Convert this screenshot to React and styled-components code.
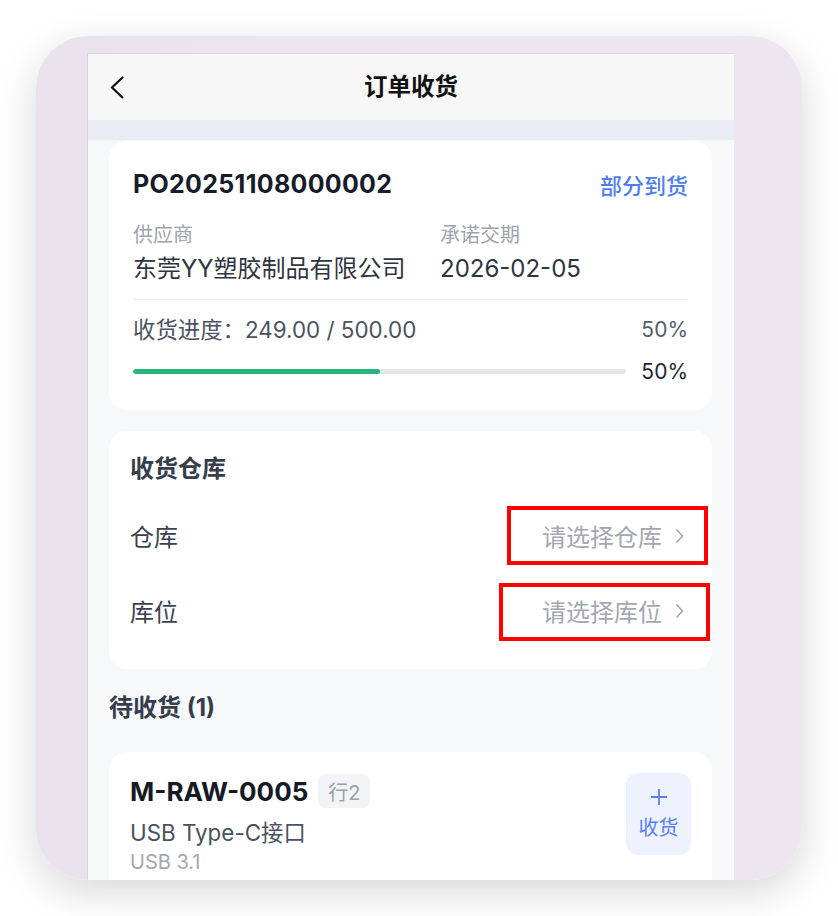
import React from "react";
import styled, { createGlobalStyle } from "styled-components";

const GlobalStyle = createGlobalStyle`
  html, body {
    margin: 0;
    padding: 0;
    background: #ffffff;
  }
  body {
    font-family: "Inter", "Noto Sans CJK SC", sans-serif;
  }
`;

const Page = styled.div`
  width: 838px;
  height: 916px;
  padding: 36px 0 0 36px;
  box-sizing: border-box;
`;

const Frame = styled.div`
  width: 766px;
  height: 844px;
  border-radius: 52px;
  background: linear-gradient(90deg, #e9e2ec 0%, #ece5f0 30%, #ede6f1 100%);
  box-shadow: 0 12px 40px rgba(0, 0, 0, 0.16);
  padding: 17px 68px 0 51px;
  box-sizing: border-box;
  overflow: hidden;
`;

const Screen = styled.div`
  height: 900px;
  background: #f7f8fa;
  border-left: 1px solid #d8d3dc;
  border-top: 1px solid #dcd7df;
  display: flex;
  flex-direction: column;
`;

const NavBar = styled.div`
  height: 66px;
  background: #f7f7f7;
  display: flex;
  align-items: center;
  justify-content: center;
  position: relative;
`;

const BackButton = styled.button`
  position: absolute;
  left: 16px;
  top: 19px;
  width: 28px;
  height: 30px;
  padding: 0;
  border: none;
  background: none;
  display: flex;
  align-items: center;
  justify-content: center;
`;

const NavTitle = styled.h1`
  margin: 0;
  font-size: 23.5px;
  font-weight: 700;
  color: #111111;
  line-height: 30px;
`;

const Strip = styled.div`
  height: 20px;
  background: #e9ecf4;
`;

const Content = styled.div`
  padding: 1px 22px 0 21px;
  display: flex;
  flex-direction: column;
`;

const Card = styled.div`
  background: #ffffff;
  border-radius: 18px;
  padding: ${(p) => p.$pad};
  margin-top: ${(p) => p.$top || "0px"};
`;

const HeadRow = styled.div`
  display: flex;
  justify-content: space-between;
  align-items: center;
  height: 34px;
`;

const OrderNo = styled.div`
  font-size: 25px;
  font-weight: 700;
  color: #171c2a;
  letter-spacing: 0.3px;
`;

const Status = styled.div`
  font-size: 22px;
  font-weight: 500;
  color: #4f7df4;
`;

const InfoGrid = styled.div`
  display: grid;
  grid-template-columns: 307px 1fr;
  margin-top: 20px;
`;

const Label = styled.div`
  font-size: 20px;
  line-height: 28px;
  color: #9ea3ad;
`;

const Value = styled.div`
  font-size: 24px;
  line-height: 32px;
  margin-top: 4px;
  color: #2f3540;
`;

const Divider = styled.div`
  height: 1px;
  background: #eeeff1;
  margin-top: 14px;
`;

const ProgressText = styled.div`
  display: flex;
  justify-content: space-between;
  margin-top: 15px;
  height: 30px;
  line-height: 30px;
  font-size: 22.4px;
  color: #4b5361;
`;

const BarRow = styled.div`
  display: flex;
  align-items: center;
  gap: 15px;
  margin-top: 11px;
  height: 30px;
`;

const Track = styled.div`
  flex: 1;
  height: 5px;
  border-radius: 3px;
  background: #e6e6e6;
  overflow: hidden;
`;

const Fill = styled.div`
  height: 100%;
  background: #2cb47d;
  border-radius: 3px;
`;

const Percent = styled.div`
  font-size: 21px;
  color: ${(p) => p.$color};
`;

const SectionTitle = styled.div`
  font-size: 24px;
  font-weight: 700;
  line-height: 28px;
  color: #363d4b;
`;

const PickRow = styled.div`
  height: 75px;
  display: flex;
  align-items: center;
  justify-content: space-between;
  margin-top: ${(p) => p.$top || "0px"};
`;

const RowLabel = styled.div`
  font-size: 24px;
  color: #3a4150;
`;

const Picker = styled.div`
  position: relative;
  display: flex;
  align-items: center;
  gap: 13px;
  height: 32px;
  margin-right: 4px;
  font-size: 24px;
  color: #a3a7b2;
`;

const Highlight = styled.span`
  position: absolute;
  top: ${(p) => p.$t}px;
  bottom: ${(p) => p.$b}px;
  left: ${(p) => p.$l}px;
  right: ${(p) => p.$r}px;
  border: 4px solid #ff0000;
  pointer-events: none;
`;

const GroupTitle = styled.div`
  margin-top: 24px;
  font-size: 24px;
  font-weight: 700;
  line-height: 30px;
  color: #363d4b;
`;

const ItemCard = styled(Card)`
  display: flex;
  justify-content: space-between;
  align-items: flex-start;
`;

const ItemInfo = styled.div`
  display: flex;
  flex-direction: column;
`;

const CodeRow = styled.div`
  display: flex;
  align-items: center;
  gap: 10px;
  margin-top: 1px;
  height: 34px;
`;

const Code = styled.div`
  font-size: 26px;
  font-weight: 700;
  color: #151a26;
`;

const Tag = styled.span`
  height: 34px;
  padding: 0 10px;
  border-radius: 7px;
  background: #f2f3f5;
  color: #9aa0a9;
  font-size: 20px;
  display: flex;
  align-items: center;
`;

const ItemName = styled.div`
  margin-top: 10px;
  font-size: 22.4px;
  line-height: 30px;
  color: #4a5160;
`;

const ItemSpec = styled.div`
  margin-top: 1px;
  font-size: 20px;
  line-height: 26px;
  color: #a2a7b1;
`;

const ReceiveButton = styled.button`
  width: 65px;
  height: 82px;
  border: none;
  border-radius: 12px;
  background: #eef2fe;
  color: #5a7ef1;
  display: flex;
  flex-direction: column;
  align-items: center;
  justify-content: center;
  gap: 6px;
  font-family: inherit;
  font-size: 20px;
  padding: 0;
`;

const Chevron = () => (
  <svg width="9" height="16" viewBox="0 0 9 16">
    <path d="M1.5 1.5 L7.5 8 L1.5 14.5" fill="none" stroke="#a3a7b2" strokeWidth="1.6" />
  </svg>
);

const pickers = [
  { label: "仓库", value: "请选择仓库", box: { t: -14, b: -13, l: -35, r: -24 } },
  { label: "库位", value: "请选择库位", box: { t: -12, b: -14, l: -43, r: -26 } },
];

export default function App() {
  const received = 249;
  const total = 500;
  const pct = Math.round((received / total) * 100);

  return (
    <Page>
      <GlobalStyle />
      <Frame>
        <Screen>
          <NavBar>
            <BackButton>
              <svg width="16" height="26" viewBox="0 0 16 26">
                <path d="M13 2 L2 12.5 L13 23" fill="none" stroke="#111" strokeWidth="2.2" />
              </svg>
            </BackButton>
            <NavTitle>订单收货</NavTitle>
          </NavBar>
          <Strip />
          <Content>
            <Card $pad="26px 24px 24px 24px">
              <HeadRow>
                <OrderNo>PO20251108000002</OrderNo>
                <Status>部分到货</Status>
              </HeadRow>
              <InfoGrid>
                <div>
                  <Label>供应商</Label>
                  <Value>东莞YY塑胶制品有限公司</Value>
                </div>
                <div>
                  <Label>承诺交期</Label>
                  <Value>2026-02-05</Value>
                </div>
              </InfoGrid>
              <Divider />
              <ProgressText>
                <span>收货进度：249.00 / 500.00</span>
                <Percent $color="#555c69">{pct}%</Percent>
              </ProgressText>
              <BarRow>
                <Track>
                  <Fill style={{ width: `${pct}%` }} />
                </Track>
                <Percent $color="#23272e">{pct}%</Percent>
              </BarRow>
            </Card>

            <Card $pad="24px 24px 21px 21px" $top="21px">
              <SectionTitle>收货仓库</SectionTitle>
              {pickers.map((p, i) => (
                <PickRow key={p.label} $top={i === 0 ? "15px" : "0px"}>
                  <RowLabel>{p.label}</RowLabel>
                  <Picker>
                    {p.value}
                    <Chevron />
                    <Highlight $t={p.box.t} $b={p.box.b} $l={p.box.l} $r={p.box.r} />
                  </Picker>
                </PickRow>
              ))}
            </Card>

            <GroupTitle>待收货 (1)</GroupTitle>

            <ItemCard $pad="21px 21px 30px 21px" $top="29px">
              <ItemInfo>
                <CodeRow>
                  <Code>M-RAW-0005</Code>
                  <Tag>行2</Tag>
                </CodeRow>
                <ItemName>USB Type-C接口</ItemName>
                <ItemSpec>USB 3.1</ItemSpec>
              </ItemInfo>
              <ReceiveButton>
                <svg width="18" height="18" viewBox="0 0 18 18">
                  <path d="M9 1 V17 M1 9 H17" stroke="#5a7ef1" strokeWidth="1.8" />
                </svg>
                收货
              </ReceiveButton>
            </ItemCard>
          </Content>
        </Screen>
      </Frame>
    </Page>
  );
}
